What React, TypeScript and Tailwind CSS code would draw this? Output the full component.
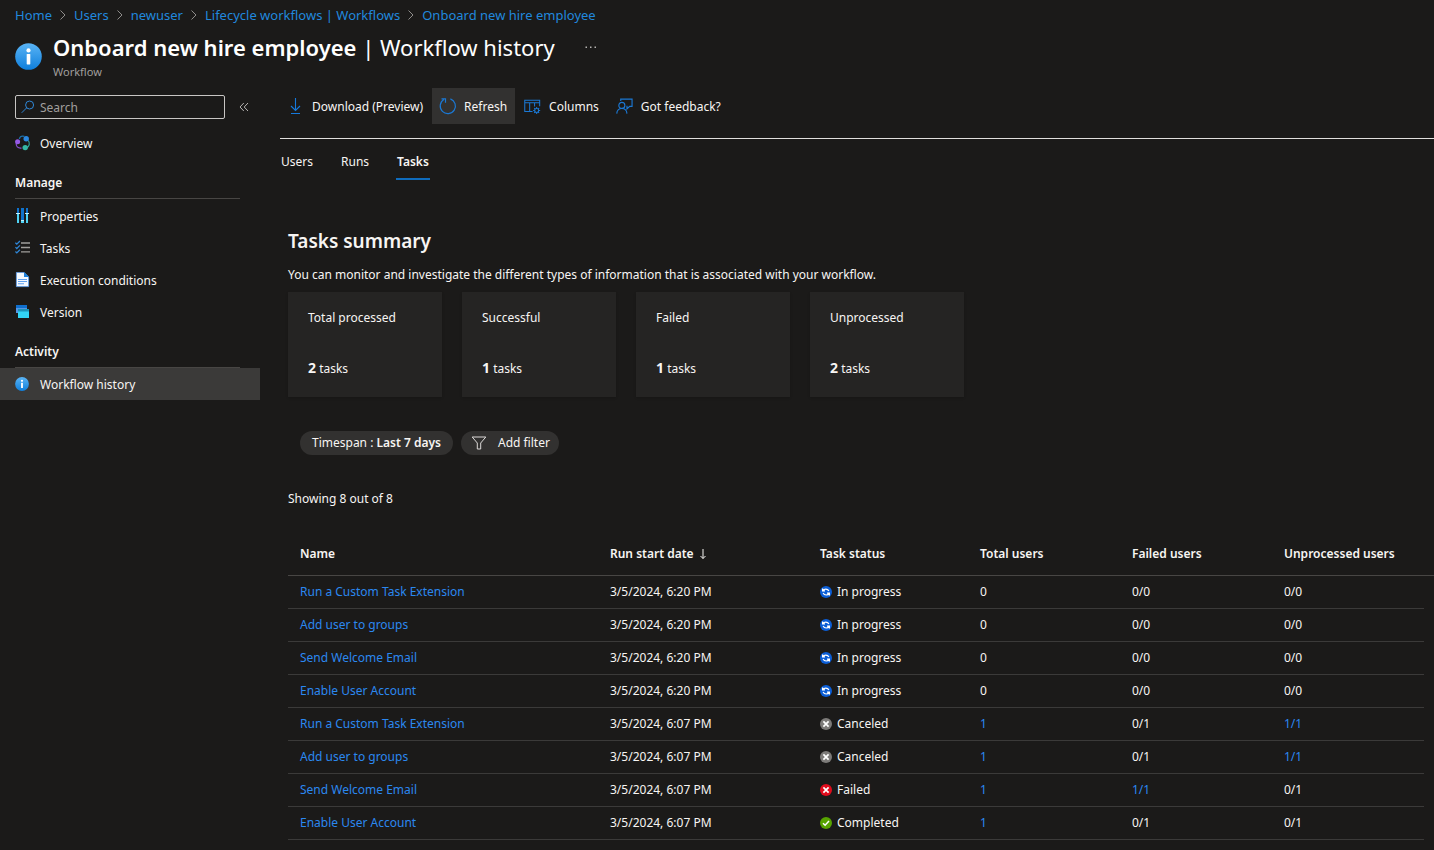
import type { ReactNode } from "react";

type Status = "In progress" | "Canceled" | "Failed" | "Completed";

interface TaskRow {
  name: string;
  date: string;
  status: Status;
  total: string;
  failed: string;
  unprocessed: string;
}

const rows: TaskRow[] = [
  { name: "Run a Custom Task Extension", date: "3/5/2024, 6:20 PM", status: "In progress", total: "0", failed: "0/0", unprocessed: "0/0" },
  { name: "Add user to groups", date: "3/5/2024, 6:20 PM", status: "In progress", total: "0", failed: "0/0", unprocessed: "0/0" },
  { name: "Send Welcome Email", date: "3/5/2024, 6:20 PM", status: "In progress", total: "0", failed: "0/0", unprocessed: "0/0" },
  { name: "Enable User Account", date: "3/5/2024, 6:20 PM", status: "In progress", total: "0", failed: "0/0", unprocessed: "0/0" },
  { name: "Run a Custom Task Extension", date: "3/5/2024, 6:07 PM", status: "Canceled", total: "1", failed: "0/1", unprocessed: "1/1" },
  { name: "Add user to groups", date: "3/5/2024, 6:07 PM", status: "Canceled", total: "1", failed: "0/1", unprocessed: "1/1" },
  { name: "Send Welcome Email", date: "3/5/2024, 6:07 PM", status: "Failed", total: "1", failed: "1/1", unprocessed: "0/1" },
  { name: "Enable User Account", date: "3/5/2024, 6:07 PM", status: "Completed", total: "1", failed: "0/1", unprocessed: "0/1" },
];

const crumbs = ["Home", "Users", "newuser", "Lifecycle workflows | Workflows", "Onboard new hire employee"];

const summary = [
  { label: "Total processed", count: 2 },
  { label: "Successful", count: 1 },
  { label: "Failed", count: 1 },
  { label: "Unprocessed", count: 2 },
];

function InfoIcon({ className, id }: { className: string; id: string }) {
  return (
    <svg viewBox="0 0 27 27" className={className} aria-hidden="true">
      <defs>
        <linearGradient id={id} x1="0" y1="0" x2="0" y2="1">
          <stop offset="0" stopColor="#5ab4f5" />
          <stop offset="1" stopColor="#0f7fdc" />
        </linearGradient>
      </defs>
      <circle cx="13.5" cy="13.5" r="13.3" fill={`url(#${id})`} />
      <circle cx="13.5" cy="7.4" r="2.1" fill="#fff" />
      <rect x="11.7" y="11" width="3.6" height="10.4" rx="0.6" fill="#fff" />
    </svg>
  );
}

function ChevronIcon() {
  return (
    <svg viewBox="0 0 8 10" className="h-[10px] w-2" fill="none" stroke="#8f8d8b" aria-hidden="true">
      <path d="M1.5 .5 6 5 1.5 9.5" />
    </svg>
  );
}

function SearchIcon() {
  return (
    <svg viewBox="0 0 14 14" className="h-[14px] w-[14px] shrink-0" fill="none" stroke="#2f86d6" aria-hidden="true">
      <circle cx="8.6" cy="5" r="4" />
      <path d="M5.7 7.8.7 12.8" />
    </svg>
  );
}

function OverviewIcon() {
  return (
    <svg viewBox="0 0 16 16" className="h-4 w-4" fill="none" aria-hidden="true">
      <path d="M4.3 4C4.8 1.7 7 .8 9.3 1.3" stroke="#1c6fa8" strokeWidth="1.2" />
      <path d="M13.3 5.5c1.8 2.6 1.2 6-1.6 7.2" stroke="#2fa397" strokeWidth="1.2" />
      <path d="M1.3 8.3c-.6 2.7 1.4 5.2 5.2 4.8" stroke="#8a4fd6" strokeWidth="1.2" />
      <circle cx="11.2" cy="3.8" r="2.7" fill="#2b88e0" />
      <circle cx="2.6" cy="6.8" r="2.5" fill="#9659e6" />
      <circle cx="10.2" cy="12.6" r="2.7" fill="#34b8a4" />
    </svg>
  );
}

function PropertiesIcon() {
  return (
    <svg viewBox="0 0 16 16" className="h-4 w-4" aria-hidden="true">
      <rect x="2" y="0" width="2" height="5" fill="#0f72cc" />
      <rect x="2" y="6" width="2" height="9" fill="#4fd3f5" />
      <rect x="1" y="5" width="4" height="1" fill="#c3f1ff" />
      <rect x="6" y="0" width="3" height="12" fill="#0f72cc" />
      <rect x="6" y="13" width="3" height="2" fill="#4fd3f5" />
      <rect x="6" y="12" width="3" height="1" fill="#c3f1ff" />
      <rect x="11" y="0" width="2" height="5" fill="#0f72cc" />
      <rect x="11" y="6" width="2" height="9" fill="#4fd3f5" />
      <rect x="10" y="5" width="4" height="1" fill="#c3f1ff" />
    </svg>
  );
}

function TasksIcon() {
  return (
    <svg viewBox="0 0 16 16" className="h-4 w-4" fill="none" aria-hidden="true">
      <path d="M6 3H15M6 7.5H15M6 11.800H15" stroke="#a09e9c" strokeWidth="1.3" />
      <path d="M.4 2.700 1.800 4.100 4.900 1M.4 7.100 1.800 8.500 4.900 5.400M.4 11.500 1.800 12.900 4.900 9.800" stroke="#2f86d6" strokeWidth="1.3" />
    </svg>
  );
}

function DocumentIcon() {
  return (
    <svg viewBox="0 0 16 16" className="h-4 w-4" aria-hidden="true">
      <path d="M1.400.4H9L13.600 5V14.600H1.400Z" fill="#f4f9ff" stroke="#5ea0ef" strokeWidth=".8" />
      <path d="M9 0 14 5H9Z" fill="#1b7fdb" />
      <path d="M3 7.500h9M3 9.500h9M3 11.700h6" stroke="#5ea0ef" strokeWidth="1.1" />
    </svg>
  );
}

function VersionIcon() {
  return (
    <svg viewBox="0 0 16 16" className="h-4 w-4" aria-hidden="true">
      <rect x="1" y="1" width="11" height="3" fill="#0f6fcd" />
      <rect x="1" y="4" width="11" height="5" fill="#5594e6" />
      <rect x="3" y="5" width="11" height="3" fill="#1a93b8" />
      <rect x="3" y="7.500" width="11" height="6.500" fill="#32d4f5" />
    </svg>
  );
}

function DownloadIcon() {
  return (
    <svg viewBox="0 0 16 18" className="h-[18px] w-4" fill="none" stroke="#1579dc" strokeWidth="1.1" aria-hidden="true">
      <path d="M7.500 0v12.500M3 8l4.500 4.500L12 8M3 15.500h9" />
    </svg>
  );
}

function RefreshIcon() {
  return (
    <svg viewBox="0 0 16 18" className="h-[18px] w-4 overflow-visible" fill="none" stroke="#1b78d4" strokeWidth="1.2" aria-hidden="true">
      <path d="M10.400.9A7.600 7.600 0 1 1 3.800 1.600M1.500.8H5.500V4.800" />
    </svg>
  );
}

function ColumnsIcon() {
  return (
    <svg viewBox="0 0 18 16" className="h-4 w-[17px]" fill="none" stroke="#1b78d4" strokeWidth="1.1" aria-hidden="true">
      <path d="M9 12.800H.8V.8H16.600V7.200M.8 3.500H16.600M6 3.500V12.800M11.200 3.500V7.500" />
      <circle cx="13.4" cy="11.7" r="2.1" />
      <path d="M13.4 8v1.6M13.4 13.800v1.6M9.7 11.700h1.6M15.5 11.700h1.6M10.8 9.100l1.1 1.1M14.9 13.200l1.1 1.1M16 9.100l-1.1 1.1M11.9 13.200l-1.1 1.1" />
    </svg>
  );
}

function FeedbackIcon() {
  return (
    <svg viewBox="0 0 18 18" className="h-[18px] w-[17px]" fill="none" stroke="#1b78d4" strokeWidth="1.2" aria-hidden="true">
      <circle cx="6.2" cy="7.300" r="3.2" />
      <path d="M.8 16c.2-3.400 2.400-5.400 5.400-5.400s5.200 2 5.400 5.400M5 2.700V.7H17V8.300H14.500L11.600 11V8.300H11" />
    </svg>
  );
}

function FilterIcon() {
  return (
    <svg viewBox="0 0 16 14" className="h-[14px] w-4" fill="none" stroke="#dcdad8" aria-hidden="true">
      <path d="M1.200 1H14.800L9.700 7V13H6.300V7Z" />
    </svg>
  );
}

function StatusIcon({ status }: { status: Status }) {
  const fill = { "In progress": "#0b5ed7", Canceled: "#7d7b79", Failed: "#e00b1c", Completed: "#57a300" }[status];
  return (
    <svg viewBox="0 0 12 12" className="h-3 w-3 shrink-0" fill="none" aria-hidden="true">
      <circle cx="6" cy="6" r="6" fill={fill} />
      {status === "In progress" && (
        <path d="M2.600 2.400V4.800H5M2.900 4.600C4 2.600 7.600 2.300 8.900 4.900M9.400 9.600V7.200H7M9.100 7.400C8 9.400 4.400 9.700 3.100 7.100" stroke="#fff" strokeWidth="1.200" />
      )}
      {(status === "Canceled" || status === "Failed") && (
        <path d="M3.400 3.400 8.600 8.600M8.600 3.400 3.400 8.600" stroke="#fff" strokeWidth="1.700" />
      )}
      {status === "Completed" && <path d="M3 6.200 5.100 8.200 9 4" stroke="#fff" strokeWidth="1.500" />}
    </svg>
  );
}

function NavItem({ icon, label, active = false }: { icon: ReactNode; label: string; active?: boolean }) {
  return (
    <li>
      <a
        href="#"
        aria-current={active ? "page" : undefined}
        className={active ? "flex h-8 items-center gap-[9px] bg-[#3b3a39] pl-[15px]" : "flex h-8 items-center gap-[9px] pl-[15px]"}
      >
        {icon}
        <span className="pt-[2px]">{label}</span>
      </a>
    </li>
  );
}

function NavHeading({ children }: { children: ReactNode }) {
  return (
    <h2 className="mr-5 ml-[15px] flex h-10 items-end border-b border-[#484644] pb-[5px] font-semibold">{children}</h2>
  );
}

function Count({ value }: { value: string }) {
  const linked = value === "1" || value === "1/1";
  return linked ? (
    <a href="#" className="text-[#2b88f0]">
      {value}
    </a>
  ) : (
    <>{value}</>
  );
}

export default function App() {
  return (
    <div className="min-h-screen bg-[#1b1a19] font-['Noto_Sans','Open_Sans',sans-serif] text-[12px] leading-5 text-[#f7f5f3]">
      <nav aria-label="Breadcrumb" className="flex h-7 items-center pt-px pl-[15px] text-[13px]">
        <ol className="flex items-center gap-[7px] text-[#2188dd]">
          {crumbs.map((c, i) => (
            <li key={c} className="flex items-center gap-[7px]">
              {i > 0 && <ChevronIcon />}
              <a href="#">{c}</a>
            </li>
          ))}
        </ol>
      </nav>

      <header className="flex gap-[11px] pt-[3px] pb-2 pl-[15px]">
        <InfoIcon id="info-large" className="mt-[12px] h-[27px] w-[27px]" />
        <div>
          <div className="flex h-8 items-center gap-6">
            <h1 className="text-[22px] leading-8 text-white">
              <span className="font-semibold">Onboard new hire employee</span> | Workflow history
            </h1>
            <button type="button" aria-label="More actions" className="flex h-6 w-6 items-center justify-center">
              <svg viewBox="0 0 12 4" className="h-1 w-3" fill="#b5b3b1" aria-hidden="true">
                <rect x="0.500" y="1.500" width="1.500" height="1.500" />
                <rect x="5" y="1.500" width="1.500" height="1.500" />
                <rect x="9.500" y="1.500" width="1.500" height="1.500" />
              </svg>
            </button>
          </div>
          <p className="mt-px text-[11px] leading-4 text-[#a19f9d]">Workflow</p>
        </div>
      </header>

      <div className="flex">
        <aside className="w-[260px] shrink-0 pt-[7px]">
          <div className="flex items-center gap-[11px] pl-[15px]">
            <label className="flex h-6 w-[210px] items-center gap-[5px] rounded-xs border border-[#c8c6c4] px-[5px]">
              <SearchIcon />
              <input
                type="search"
                aria-label="Search"
                placeholder="Search"
                className="w-full min-w-0 bg-transparent pt-[2px] outline-none placeholder:text-[#a19f9d]"
              />
            </label>
            <button type="button" aria-label="Collapse menu" className="flex h-6 w-4 items-center justify-center">
              <svg viewBox="0 0 10 10" className="h-[10px] w-[10px]" fill="none" stroke="#b5b3b1" aria-hidden="true">
                <path d="M4.800 1 1 5l3.800 4M9 1 5.200 5 9 9" />
              </svg>
            </button>
          </div>
          <nav aria-label="Workflow" className="mt-2">
            <ul>
              <NavItem icon={<OverviewIcon />} label="Overview" />
            </ul>
            <NavHeading>Manage</NavHeading>
            <ul className="pt-px">
              <NavItem icon={<PropertiesIcon />} label="Properties" />
              <NavItem icon={<TasksIcon />} label="Tasks" />
              <NavItem icon={<DocumentIcon />} label="Execution conditions" />
              <NavItem icon={<VersionIcon />} label="Version" />
            </ul>
            <NavHeading>Activity</NavHeading>
            <ul>
              <NavItem icon={<InfoIcon id="info-small" className="mr-[2px] h-[14px] w-[14px]" />} label="Workflow history" active />
            </ul>
          </nav>
        </aside>

        <main className="min-w-0 flex-1 pl-5">
          <div role="toolbar" aria-label="Workflow actions" className="flex gap-px border-b border-[#e1dfdd] pb-[14px]">
            <button type="button" className="flex h-9 items-center gap-2 px-2 pt-[2px]">
              <DownloadIcon />
              Download (Preview)
            </button>
            <button type="button" className="flex h-9 items-center gap-2 bg-[#323130] px-2 pt-[2px]">
              <RefreshIcon />
              Refresh
            </button>
            <button type="button" className="flex h-9 items-center gap-2 px-2 pt-[2px]">
              <ColumnsIcon />
              Columns
            </button>
            <button type="button" className="flex h-9 items-center gap-2 px-2 pt-[2px]">
              <FeedbackIcon />
              Got feedback?
            </button>
          </div>

          <div role="tablist" className="flex gap-[26px]">
            <button type="button" role="tab" aria-selected="false" className="px-px pt-[13px] pb-2">
              Users
            </button>
            <button type="button" role="tab" aria-selected="false" className="px-px pt-[13px] pb-2">
              Runs
            </button>
            <button type="button" role="tab" aria-selected="true" className="border-b-2 border-[#0f6cbd] px-px pt-[13px] pb-[6px] font-semibold">
              Tasks
            </button>
          </div>

          <section className="pt-[49px] pl-2">
            <h2 className="text-[19px] leading-6 font-semibold">Tasks summary</h2>
            <p className="mt-3">
              You can monitor and investigate the different types of information that is associated with your workflow.
            </p>
            <ul className="mt-[7px] flex flex-wrap gap-5">
              {summary.map((s) => (
                <li key={s.label} className="flex h-[105px] w-[154px] flex-col justify-between bg-[#252423] px-5 pt-4 pb-[18px] shadow-sm">
                  <span>{s.label}</span>
                  <span>
                    <strong className="text-[14px] font-bold">{s.count}</strong> tasks
                  </span>
                </li>
              ))}
            </ul>

            <div className="mt-[34px] flex gap-2 pl-3">
              <button type="button" className="h-6 rounded-full bg-[#323130] px-3 whitespace-pre">
                Timespan : <span className="font-semibold">Last 7 days</span>
              </button>
              <button type="button" className="flex h-6 items-center gap-[11px] rounded-full bg-[#323130] pr-[9px] pl-[10px]">
                <FilterIcon />
                Add filter
              </button>
            </div>

            <p className="mt-[34px]">Showing 8 out of 8</p>

            <table className="mt-[22px] w-full table-fixed border-collapse text-left">
              <colgroup>
                <col className="w-[310px]" />
                <col className="w-[210px]" />
                <col className="w-[160px]" />
                <col className="w-[152px]" />
                <col className="w-[152px]" />
                <col />
                <col className="w-[10px]" />
              </colgroup>
              <thead>
                <tr className="h-11 border-b border-[#484644]">
                  <th className="px-3 pt-[2px] font-semibold">Name</th>
                  <th aria-sort="descending" className="px-3 pt-[2px] font-semibold">
                    <button type="button" className="flex items-center gap-[5px]">
                      Run start date
                      <svg viewBox="0 0 8 12" className="h-3 w-2" fill="none" stroke="#f7f5f3" aria-hidden="true">
                        <path d="M4 1V10.500M1.500 8 4 10.500 6.500 8" />
                      </svg>
                    </button>
                  </th>
                  <th className="px-3 pt-[2px] font-semibold">Task status</th>
                  <th className="px-3 pt-[2px] font-semibold">Total users</th>
                  <th className="px-3 pt-[2px] font-semibold">Failed users</th>
                  <th colSpan={2} className="px-3 pt-[2px] font-semibold">
                    Unprocessed users
                  </th>
                </tr>
              </thead>
              <tbody>
                {rows.map((r) => (
                  <tr key={r.name + r.date} className="h-[33px]">
                    <td className="border-b border-[#3b3a39] px-3">
                      <a href="#" className="text-[#2b88f0]">
                        {r.name}
                      </a>
                    </td>
                    <td className="border-b border-[#3b3a39] px-3">{r.date}</td>
                    <td className="border-b border-[#3b3a39] px-3">
                      <span className="flex items-center gap-[5px]">
                        <StatusIcon status={r.status} />
                        {r.status}
                      </span>
                    </td>
                    <td className="border-b border-[#3b3a39] px-3">
                      <Count value={r.total} />
                    </td>
                    <td className="border-b border-[#3b3a39] px-3">
                      <Count value={r.failed} />
                    </td>
                    <td className="border-b border-[#3b3a39] px-3">
                      <Count value={r.unprocessed} />
                    </td>
                  </tr>
                ))}
              </tbody>
            </table>
          </section>
        </main>
      </div>
    </div>
  );
}
